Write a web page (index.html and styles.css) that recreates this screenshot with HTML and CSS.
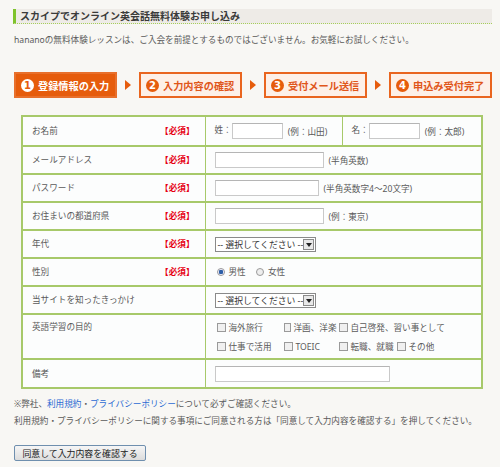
FILE: index.html
```html
<!DOCTYPE html>
<html>
	<head>
		<meta charset="UTF-8">
		<title>スカイプでオンライン英会話無料体験お申し込み</title>
		<link rel="stylesheet" href="styles.css">
	</head>
	<body>
		<div id="wrap">
			<h1 class="title">スカイプでオンライン英会話無料体験お申し込み</h1>
			<p class="intro">hananoの無料体験レッスンは、ご入会を前提とするものではございません。お気軽にお試しください。</p>

			<!--ステップ-->
			<ol class="steps">
				<li class="step now"><span class="num">1</span>登録情報の入力</li>
				<li class="arrow"></li>
				<li class="step"><span class="num">2</span>入力内容の確認</li>
				<li class="arrow"></li>
				<li class="step"><span class="num">3</span>受付メール送信</li>
				<li class="arrow"></li>
				<li class="step"><span class="num">4</span>申込み受付完了</li>
			</ol>

			<!--フォーム-->
			<table class="form">
				<tr class="first">
					<th><div class="label">お名前<span class="req">【必須】</span></div></th>
					<td>姓：<input type="text" class="txt short"><span class="hint">(例：山田)</span></td>
					<td class="sub">名：<input type="text" class="txt short"><span class="hint">(例：太郎)</span></td>
				</tr>
				<tr>
					<th><div class="label">メールアドレス<span class="req">【必須】</span></div></th>
					<td colspan="2"><input type="text" class="txt mid"><span class="hint">(半角英数)</span></td>
				</tr>
				<tr>
					<th><div class="label">パスワード<span class="req">【必須】</span></div></th>
					<td colspan="2"><input type="password" class="txt pw"><span class="hint">(半角英数字4～20文字)</span></td>
				</tr>
				<tr>
					<th><div class="label">お住まいの都道府県<span class="req">【必須】</span></div></th>
					<td colspan="2"><input type="text" class="txt mid"><span class="hint">(例：東京)</span></td>
				</tr>
				<tr>
					<th><div class="label">年代<span class="req">【必須】</span></div></th>
					<td colspan="2"><span class="select">-- 選択してください --<i></i></span></td>
				</tr>
				<tr>
					<th><div class="label">性別<span class="req">【必須】</span></div></th>
					<td colspan="2">
						<label class="radio"><input type="radio" name="sex" checked>男性</label>
						<label class="radio"><input type="radio" name="sex">女性</label>
					</td>
				</tr>
				<tr>
					<th><div class="label">当サイトを知ったきっかけ</div></th>
					<td colspan="2"><span class="select">-- 選択してください --<i></i></span></td>
				</tr>
				<tr class="purpose">
					<th><div class="label">英語学習の目的</div></th>
					<td colspan="2">
						<div class="checks">
							<label><input type="checkbox">海外旅行</label>
							<label><input type="checkbox">洋画、洋楽</label>
							<label><input type="checkbox">自己啓発、習い事として</label>
							<label><input type="checkbox">仕事で活用</label>
							<label><input type="checkbox">TOEIC</label>
							<label><input type="checkbox">転職、就職</label>
							<label><input type="checkbox">その他</label>
						</div>
					</td>
				</tr>
				<tr class="last">
					<th><div class="label">備考</div></th>
					<td colspan="2"><input type="text" class="txt long"></td>
				</tr>
			</table>

			<div class="notes">
				<p>※弊社、<a href="#">利用規約</a>・<a href="#">プライバシーポリシー</a>について必ずご確認ください。</p>
				<p>利用規約・プライバシーポリシーに関する事項にご同意される方は「同意して入力内容を確認する」を押してください。</p>
			</div>

			<button type="button" class="btn">同意して入力内容を確認する</button>
		</div>
	</body>
</html>
```

FILE: styles.css
```css
*{
	margin: 0px;
	padding: 0px;
	box-sizing: border-box;
}
ol,li{
	list-style: none;
}
body{
	background: #f8f7f4;
	font-family: "Noto Sans", "Noto Sans CJK JP", sans-serif;
	font-size: 8.6px;
	color: #5a5a5a;
}
#wrap{
	padding: 9px 8px 0px 13px;
}
.title{
	width: 479px;
	height: 15px;
	line-height: 14px;
	background: #eeebe7;
	border-left: 3px solid #7fc32c;
	border-bottom: 1px dotted #a6cf5a;
	padding-left: 4px;
	font-size: 10px;
	font-weight: bold;
	color: #3a3a3a;
}
.intro{
	margin: 10px 0px 0px 1px;
	line-height: 12px;
}
/*ステップ*/
.steps{
	display: flex;
	align-items: center;
	margin: 26px 0px 0px 1px;
}
.step{
	width: 103px;
	height: 26px;
	border: 2px solid #e9651f;
	background: #fdf0e8;
	display: flex;
	align-items: center;
	gap: 4px;
	padding-left: 5px;
	font-size: 10.2px;
	font-weight: bold;
	color: #e0561a;
	white-space: nowrap;
}
.step .num{
	width: 13px;
	height: 13px;
	border-radius: 50%;
	background: #e65c0c;
	color: #fff;
	font-size: 10px;
	line-height: 13px;
	text-align: center;
	font-family: "DejaVu Sans", sans-serif;
}
.step.now{
	background: #e65c0c;
	border-color: #e8702c;
	color: #fff;
}
.step.now .num{
	background: #fff;
	color: #e65c0c;
}
.arrow{
	width: 0px;
	height: 0px;
	margin: 0px 8px;
	border-top: 5px solid transparent;
	border-bottom: 5px solid transparent;
	border-left: 6px solid #e65c0c;
}
/*フォーム*/
.form{
	width: 462px;
	margin: 17px 0px 0px 8px;
	border-collapse: collapse;
	background: #fcfdfd;
	border: 2px solid #a7c96a;
}
.form tr{
	height: 28px;
	border-bottom: 2px solid #a7c96a;
}
.form tr.first{
	height: 30px;
}
.form tr.purpose{
	height: 45px;
}
.form tr.last{
	height: 29px;
}
.form th{
	width: 183px;
	font-weight: normal;
	text-align: left;
	vertical-align: middle;
	border-right: 1px solid #a7c96a;
}
.form tr.purpose th{
	vertical-align: top;
	padding-top: 6px;
}
.form .label{
	display: flex;
	justify-content: space-between;
	padding: 0px 10px 0px 9px;
	line-height: 12px;
}
.form .req{
	color: #e60012;
	font-weight: bold;
}
.form td{
	padding-left: 9px;
	vertical-align: middle;
	white-space: nowrap;
}
.form td.sub{
	width: 140px;
	border-left: 1px solid #a7c96a;
}
.txt{
	height: 16px;
	border: 1px solid #c9c9c9;
	border-top-color: #b5b5b5;
	background: #fff;
	vertical-align: middle;
	font-size: 9px;
}
.txt.short{
	width: 51px;
}
.txt.mid{
	width: 109px;
}
.txt.pw{
	width: 104px;
}
.txt.long{
	width: 175px;
}
.hint{
	margin-left: 5px;
	vertical-align: middle;
}
.select{
	display: inline-flex;
	align-items: center;
	width: 101px;
	height: 15px;
	border: 1px solid #8a8a8a;
	background: #fff;
	color: #333;
	padding-left: 2px;
	font-size: 8.8px;
	justify-content: space-between;
	vertical-align: middle;
}
.select i{
	width: 11px;
	height: 11px;
	margin-right: 1px;
	border: 1px solid #8a8a8a;
	background: #e8e8e8;
	position: relative;
}
.select i:after{
	content: "";
	position: absolute;
	left: 2px;
	top: 3px;
	border-top: 4px solid #222;
	border-left: 3px solid transparent;
	border-right: 3px solid transparent;
}
.radio{
	display: inline-flex;
	align-items: center;
	margin-right: 6px;
}
.radio input{
	appearance: none;
	width: 8px;
	height: 8px;
	margin: 0px 4px 0px 2px;
	border-radius: 50%;
	border: 1px solid #9a9a9a;
	background: #eee;
}
.radio input:checked{
	background: radial-gradient(circle, #2d5fa8 0 2px, #eef 2.5px);
}
.checks{
	display: grid;
	grid-template-columns: 67px 55px 58px auto;
	row-gap: 7px;
	padding-top: 1px;
}
.checks label{
	display: flex;
	align-items: center;
	line-height: 12px;
}
.checks label:nth-child(3){
	grid-column: 3 / 5;
}
.checks input{
	appearance: none;
	width: 9px;
	height: 9px;
	margin: 0px 3px 0px 2px;
	border: 1px solid #9a9a9a;
	background: #f0f0f0;
}
.notes{
	margin: 7px 0px 0px 1px;
}
.notes p{
	line-height: 17px;
}
.notes a{
	color: #2b6ad3;
	text-decoration: none;
}
.btn{
	display: block;
	width: 132px;
	height: 16px;
	margin: 15px 0px 0px 1px;
	border: 1px solid #6f8fae;
	border-radius: 2px;
	background: linear-gradient(#f6f6f6, #dcdcdc);
	font-family: "Noto Sans CJK JP", sans-serif;
	font-size: 8.9px;
	color: #222;
	line-height: 13px;
}
```
